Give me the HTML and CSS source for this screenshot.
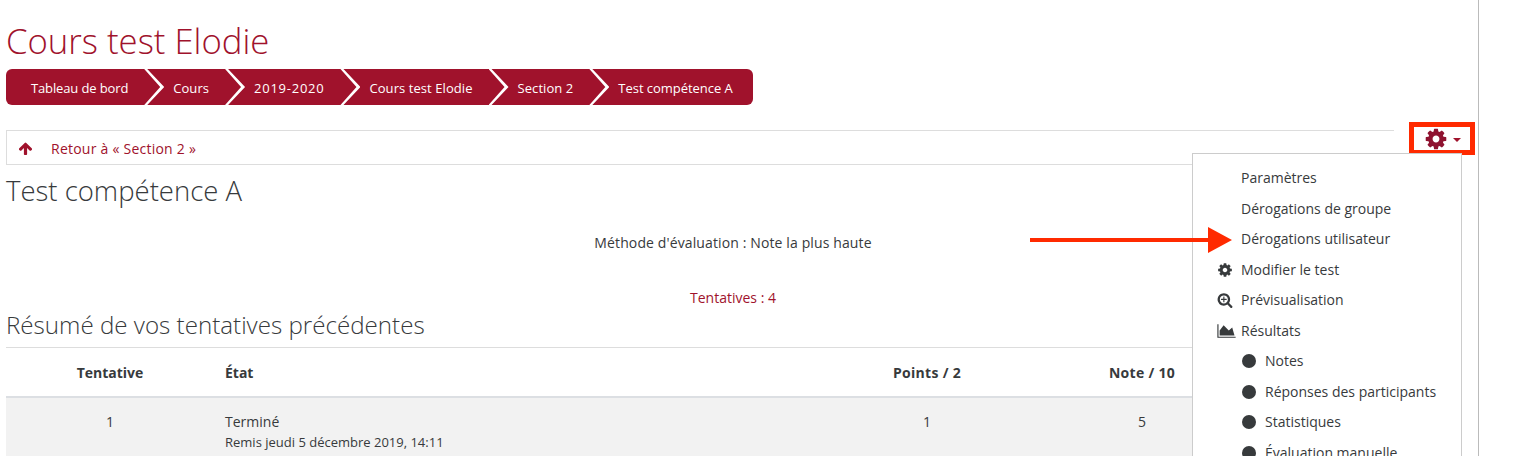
FILE: index.html
```html
<!DOCTYPE html>
<html lang="fr">
<head>
<meta charset="UTF-8" />
<meta name="viewport" content="width=device-width, initial-scale=1" />
<title>Test compétence A</title>
<link rel="stylesheet" href="styles.css">
</head>
<body>

<div class="page">
  <header class="page-header">
    <h1>Cours test Elodie</h1>
    <ol class="breadcrumb">
      <li class="crumb-home">Tableau de bord</li>
      <li>Cours</li>
      <li class="crumb-year">2019-2020</li>
      <li>Cours test Elodie</li>
      <li>Section 2</li>
      <li class="crumb-last">Test compétence A</li>
    </ol>
  </header>

  <nav class="back-bar">
    <svg class="back-icon" viewBox="0 0 1792 1792"><path d="M1675 971q0 51-37 90l-75 75q-38 38-91 38-54 0-90-38l-294-293v704q0 52-37.5 84.5t-90.5 32.5h-128q-53 0-90.5-32.5t-37.5-84.5v-704l-294 293q-36 38-90 38t-90-38l-75-75q-38-38-38-90 0-53 38-91l651-651q35-37 90-37 54 0 91 37l651 651q37 39 37 91z"/></svg>
    <a href="#">Retour à « Section 2 »</a>
  </nav>

  <h2 class="quiz-title">Test compétence A</h2>
  <p class="grading-method">Méthode d'évaluation : Note la plus haute</p>
  <p class="attempts-link"><a href="#">Tentatives : 4</a></p>

  <h3 class="summary-title">Résumé de vos tentatives précédentes</h3>
  <table class="summary">
    <colgroup>
      <col class="col-attempt">
      <col class="col-state">
      <col class="col-points">
      <col class="col-grade">
      <col>
    </colgroup>
    <thead>
      <tr>
        <th>Tentative</th>
        <th class="left">État</th>
        <th class="num">Points / 2</th>
        <th class="num">Note / 10</th>
        <th></th>
      </tr>
    </thead>
    <tbody>
      <tr>
        <td>1</td>
        <td class="left">Terminé<div class="submitted">Remis jeudi 5 décembre 2019, 14:11</div></td>
        <td>1</td>
        <td>5</td>
        <td></td>
      </tr>
    </tbody>
  </table>

  <!-- settings cog + open dropdown -->
  <button type="button" class="cog-btn">
    <svg class="cog-icon" viewBox="0 0 1536 1792"><path d="M1024 896q0-106-75-181t-181-75-181 75-75 181 75 181 181 75 181-75 75-181zm512-109v222q0 12-8 23t-20 13l-185 28q-19 54-39 91 35 50 107 138 10 12 10 25t-9 23q-27 37-99 108t-94 71q-12 0-26-9l-138-108q-44 23-91 38-16 136-29 186-7 28-36 28h-222q-14 0-24.5-8.5t-11.5-21.5l-28-184q-49-16-90-37l-141 107q-10 9-25 9-14 0-25-11-126-114-165-168-7-10-7-23 0-12 8-23 15-21 51-66.5t54-70.5q-27-50-41-99l-183-27q-13-2-21-12.5t-8-23.5v-222q0-12 8-23t19-13l186-28q14-46 39-92-40-57-107-138-10-12-10-24 0-10 9-23 26-36 98.5-107.5t94.5-71.5q13 0 26 10l138 107q44-23 91-38 16-136 29-186 7-28 36-28h222q14 0 24.5 8.5t11.5 21.5l28 184q49 16 90 37l142-107q9-9 24-9 13 0 25 10 129 119 165 170 7 8 7 22 0 12-8 23-15 21-51 66.5t-54 70.5q26 50 41 98l183 28q13 2 21 12.5t8 23.5z"/></svg>
    <span class="caret"></span>
  </button>

  <ul class="menu">
    <li>Paramètres</li>
    <li>Dérogations de groupe</li>
    <li>Dérogations utilisateur</li>
    <li>
      <svg class="menu-icon" viewBox="0 0 1536 1792"><path d="M1024 896q0-106-75-181t-181-75-181 75-75 181 75 181 181 75 181-75 75-181zm512-109v222q0 12-8 23t-20 13l-185 28q-19 54-39 91 35 50 107 138 10 12 10 25t-9 23q-27 37-99 108t-94 71q-12 0-26-9l-138-108q-44 23-91 38-16 136-29 186-7 28-36 28h-222q-14 0-24.5-8.5t-11.5-21.5l-28-184q-49-16-90-37l-141 107q-10 9-25 9-14 0-25-11-126-114-165-168-7-10-7-23 0-12 8-23 15-21 51-66.5t54-70.5q-27-50-41-99l-183-27q-13-2-21-12.5t-8-23.5v-222q0-12 8-23t19-13l186-28q14-46 39-92-40-57-107-138-10-12-10-24 0-10 9-23 26-36 98.5-107.5t94.5-71.5q13 0 26 10l138 107q44-23 91-38 16-136 29-186 7-28 36-28h222q14 0 24.5 8.5t11.5 21.5l28 184q49 16 90 37l142-107q9-9 24-9 13 0 25 10 129 119 165 170 7 8 7 22 0 12-8 23-15 21-51 66.5t-54 70.5q26 50 41 98l183 28q13 2 21 12.5t8 23.5z"/></svg>
      Modifier le test
    </li>
    <li>
      <svg class="menu-icon" viewBox="0 0 1792 1792"><path d="M1088 800v64q0 13-9.5 22.5t-22.5 9.5h-224v224q0 13-9.5 22.5t-22.5 9.5h-64q-13 0-22.5-9.5t-9.5-22.5v-224h-224q-13 0-22.5-9.5t-9.5-22.5v-64q0-13 9.5-22.5t22.5-9.5h224v-224q0-13 9.5-22.5t22.5-9.5h64q13 0 22.5 9.5t9.5 22.5v224h224q13 0 22.5 9.5t9.5 22.5zm128 32q0-185-131.5-316.5t-316.5-131.5-316.5 131.5-131.5 316.5 131.5 316.5 316.5 131.5 316.5-131.5 131.5-316.5zm512 832q0 53-37.5 90.5t-90.5 37.5q-54 0-90-38l-343-342q-179 124-399 124-143 0-273.5-55.5t-225-150-150-225-55.5-273.5 55.5-273.5 150-225 225-150 273.5-55.5 273.5 55.5 225 150 150 225 55.5 273.5q0 220-124 399l343 343q37 37 37 90z"/></svg>
      Prévisualisation
    </li>
    <li>
      <svg class="menu-icon wide" viewBox="0 0 2048 1792"><path d="M2048 1536v128H0V128h128v1408h1920zM1664 512l256 896H256V832l448-576 576 576z"/></svg>
      Résultats
    </li>
    <li class="sub">Notes</li>
    <li class="sub">Réponses des participants</li>
    <li class="sub">Statistiques</li>
    <li class="sub">Évaluation manuelle</li>
  </ul>

  <!-- annotation painted on top of the screenshot -->
  <svg class="annotation" viewBox="0 0 202 26"><path d="M0 11h178V0l24 13-24 13V15H0z"/></svg>
</div>

</body>
</html>
```

FILE: styles.css
```css
* {
  box-sizing: border-box;
}
html, body {
  margin: 0;
  padding: 0;
  height: 100%;
  overflow: hidden;
}
body {
  font-family: 'Open Sans', 'Noto Sans', sans-serif;
  font-size: 14px;
  line-height: 1.5;
  color: #373a3c;
  background: #fff;
}
a {
  color: #a0122c;
  text-decoration: none;
}

.page {
  position: relative;
  width: 1479px;
  height: 456px;
  padding: 0 18px 0 6px;
  border-right: 1px solid #bbb;
  overflow: hidden;
}

/* Header + breadcrumb */
.page-header h1 {
  margin: 0;
  padding-top: 18px;
  height: 69px;
  font-size: 34.7px;
  line-height: 46px;
  font-weight: 300;
  color: #a0122c;
}
.breadcrumb {
  display: inline-flex;
  margin: 0;
  padding: 0;
  list-style: none;
  height: 36px;
  line-height: 38px;
  color: #fff;
  background: #a0122c;
  border-radius: 6px;
  font-size: 13px;
  letter-spacing: 0.07px;
}
.breadcrumb li {
  position: relative;
  padding: 0 36px 0 9px;
}
.breadcrumb li:first-child {
  padding-left: 25px;
}
.breadcrumb li:last-child {
  padding-right: 20px;
}
.breadcrumb li:not(:last-child)::after {
  content: '';
  position: absolute;
  top: 0;
  right: 0;
  width: 20px;
  height: 36px;
  background: #fff;
  clip-path: polygon(0 0, 3px 0, 20px 50%, 3px 100%, 0 100%, 16px 50%);
}
.breadcrumb .crumb-home {
  letter-spacing: -0.13px;
}
.breadcrumb .crumb-year {
  letter-spacing: 0.75px;
}
.breadcrumb .crumb-last {
  letter-spacing: -0.04px;
}

/* Back link */
.back-bar {
  display: flex;
  align-items: center;
  height: 35px;
  margin: 25px 66px 0 0;
  padding: 2px 0 0 11px;
  border: 1px solid #ddd;
  border-right: 0;
}
.back-bar a {
  letter-spacing: 0.24px;
}
.back-icon {
  width: 15px;
  height: 15px;
  margin-right: 18px;
  fill: #a0122c;
}

/* Quiz info */
.quiz-title {
  margin: 8px 0 0;
  font-size: 27.5px;
  line-height: 36px;
  font-weight: 300;
}
.grading-method,
.attempts-link {
  margin: 0;
  text-align: center;
}
.grading-method {
  margin-top: 23px;
  letter-spacing: 0.12px;
}
.attempts-link {
  margin-top: 34px;
}
.summary-title {
  margin: -2px 0 0;
  font-size: 24.15px;
  line-height: 38px;
  font-weight: 300;
  height: 41px;
}

/* Attempts table */
.summary {
  width: 100%;
  table-layout: fixed;
  border-collapse: collapse;
  text-align: center;
}
.col-attempt { width: 208px; }
.col-state { width: 608px; }
.col-points { width: 210px; }
.col-grade { width: 220px; }
.summary th {
  height: 49px;
  padding: 1px 12px 0;
  border-top: 1px solid #ddd;
  border-bottom: 2px solid #dcdfe3;
  font-weight: 700;
}
.summary th.num {
  letter-spacing: 0.3px;
}
.summary td {
  padding: 13px 12px;
  vertical-align: top;
  background: #f2f2f2;
}
.summary .left {
  padding-left: 11px;
  text-align: left;
}
.submitted {
  font-size: 13px;
  line-height: 20px;
}

/* Cog button */
.cog-btn {
  position: absolute;
  top: 122px;
  left: 1409px;
  width: 66px;
  height: 33px;
  display: flex;
  align-items: center;
  padding: 0 0 0 11px;
  background: #fff;
  border: 5px solid #ff2a00;
}
.cog-icon {
  width: 22px;
  height: 24px;
  fill: #8f1230;
}
.caret {
  margin: 3px 0 0 6px;
  border-top: 4px solid #a0122c;
  border-left: 4px solid transparent;
  border-right: 4px solid transparent;
}

/* Dropdown */
.menu {
  position: absolute;
  top: 153px;
  left: 1192px;
  width: 270px;
  height: 320px;
  margin: 0;
  padding: 9px 0 0;
  list-style: none;
  background: #fff;
  border: 1px solid #ccc;
}
.menu li {
  position: relative;
  height: 30.5px;
  line-height: 30px;
  padding-left: 48px;
}
.menu-icon {
  position: absolute;
  top: 7px;
  left: 24px;
  width: 16px;
  height: 16px;
  fill: #373a3c;
}
.menu-icon.wide {
  width: 19px;
}
.menu .sub {
  padding-left: 72px;
}
.menu .sub::before {
  content: '';
  position: absolute;
  top: 8px;
  left: 49px;
  width: 14px;
  height: 14px;
  border-radius: 50%;
  background: #373a3c;
}

.annotation {
  position: absolute;
  top: 227px;
  left: 1030px;
  width: 202px;
  height: 26px;
  fill: #ff2a00;
}
```
